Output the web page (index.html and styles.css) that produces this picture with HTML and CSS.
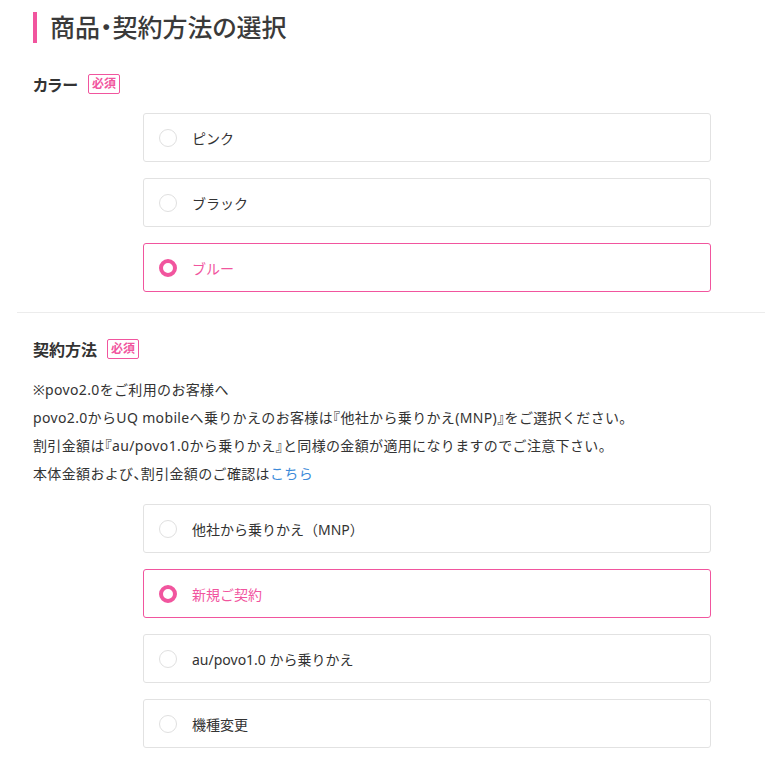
FILE: index.html
```html
<!DOCTYPE html>
<html lang="ja">
<head>
    <meta charset="UTF-8">
    <meta name="viewport" content="width=device-width, initial-scale=1.0">
    <title>商品・契約方法の選択</title>
    <link rel="stylesheet" href="styles.css">
</head>
<body>
    <main class="page">
        <h1 class="title">商品・契約方法の選択</h1>

        <section class="field">
            <div class="field-head">
                <span class="field-label">カラー</span>
                <span class="required">必須</span>
            </div>
            <div class="options">
                <label class="option"><span class="radio"></span>ピンク</label>
                <label class="option"><span class="radio"></span>ブラック</label>
                <label class="option checked"><span class="radio"></span>ブルー</label>
            </div>
        </section>

        <hr class="divider">

        <section class="field">
            <div class="field-head">
                <span class="field-label">契約方法</span>
                <span class="required">必須</span>
            </div>
            <div class="notice">
                <p>※povo2.0をご利用のお客様へ</p>
                <p>povo2.0からUQ mobileへ乗りかえのお客様は<span class="kakko">『</span>他社から乗りかえ(MNP)<span class="kakko">』</span>をご選択ください。</p>
                <p>割引金額は<span class="kakko">『</span>au/povo1.0から乗りかえ<span class="kakko">』</span>と同様の金額が適用になりますのでご注意下さい。</p>
                <p>本体金額および<span class="kakko">、</span>割引金額のご確認は<a href="#">こちら</a></p>
            </div>
            <div class="options">
                <label class="option"><span class="radio"></span>他社から乗りかえ（MNP）</label>
                <label class="option checked"><span class="radio"></span>新規ご契約</label>
                <label class="option"><span class="radio"></span>au/povo1.0 から乗りかえ</label>
                <label class="option"><span class="radio"></span>機種変更</label>
            </div>
        </section>
    </main>
</body>
</html>
```

FILE: styles.css
```css
body{
    margin: 0px;
    background: #ffffff;
    color: #333333;
    font-family: "Noto Sans", "Noto Sans CJK JP", sans-serif;
}
.page{
    padding-left: 17px;
}
.title{
    margin: 12px 0 0 16px;
    padding-left: 13px;
    border-left: 4px solid #f1559e;
    font-size: 25px;
    font-weight: 500;
    line-height: 31px;
    height: 31px;
    display: flex;
    align-items: center;
    color: #3a3a3a;
    font-feature-settings: "palt";
}
.field{
    padding-left: 16px;
}
.field-head{
    display: flex;
    align-items: center;
    height: 24px;
    margin-top: 29px;
}
.divider + .field .field-head{
    margin-top: 24px;
}
.field-label{
    font-size: 16px;
    font-weight: bold;
    margin-right: 10px;
    font-feature-settings: "palt";
}
.required{
    border: 1px solid #f1559e;
    border-radius: 2px;
    color: #f1559e;
    font-size: 12px;
    font-weight: bold;
    line-height: 18px;
    padding: 0 3px;
}
.options{
    margin-left: 110px;
    width: 568px;
    display: flex;
    flex-direction: column;
    gap: 16px;
    margin-top: 17px;
}
.option{
    box-sizing: border-box;
    height: 49px;
    border: 1px solid #e2e2e2;
    border-radius: 3px;
    display: flex;
    align-items: center;
    padding-left: 15px;
    font-size: 14px;
}
.radio{
    box-sizing: border-box;
    width: 18px;
    height: 18px;
    border: 1px solid #e0e0e0;
    border-radius: 50%;
    margin-right: 15px;
}
.option.checked{
    border-color: #f1559e;
    color: #f1559e;
}
.option.checked .radio{
    border: 4px solid #f1559e;
}
.divider{
    margin: 20px 0 0 0;
    border: none;
    border-top: 1px solid #ececec;
}
.notice{
    margin-top: 15px;
    font-size: 14px;
    line-height: 28px;
    letter-spacing: 0.025em;
}
.notice p{
    margin: 0;
}
.notice .kakko{
    font-feature-settings: "halt";
}
.notice a{
    color: #3c8bd9;
    text-decoration: none;
}
.notice + .options{
    margin-top: 16px;
}
```
